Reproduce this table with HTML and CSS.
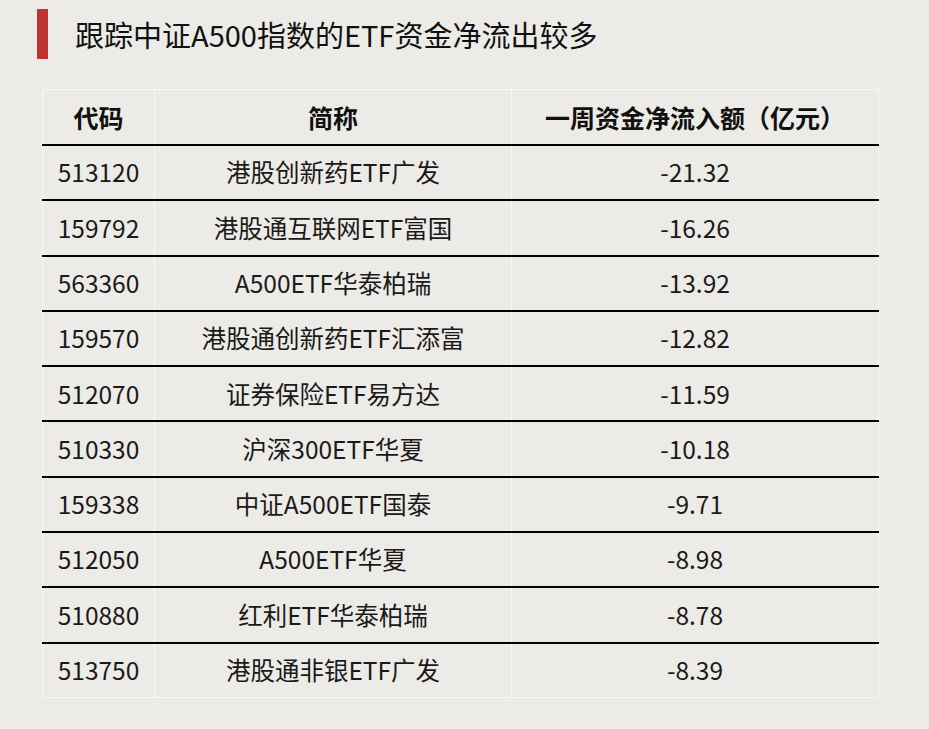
FILE: index.html
```html
<!DOCTYPE html>
<html lang="zh-CN">
<head>
<meta charset="utf-8">
<link rel="stylesheet" href="styles.css">
</head>
<body>
<div class="page">
  <div class="title-row">
    <div class="title-bar"></div>
    <h1 class="title">跟踪中证A500指数的ETF资金净流出较多</h1>
  </div>
  <table class="data">
    <thead>
      <tr><th class="c1">代码</th><th class="c2">简称</th><th class="c3">一周资金净流入额（亿元）</th></tr>
    </thead>
    <tbody>
      <tr><td>513120</td><td>港股创新药ETF广发</td><td>-21.32</td></tr>
      <tr><td>159792</td><td>港股通互联网ETF富国</td><td>-16.26</td></tr>
      <tr><td>563360</td><td>A500ETF华泰柏瑞</td><td>-13.92</td></tr>
      <tr><td>159570</td><td>港股通创新药ETF汇添富</td><td>-12.82</td></tr>
      <tr><td>512070</td><td>证券保险ETF易方达</td><td>-11.59</td></tr>
      <tr><td>510330</td><td>沪深300ETF华夏</td><td>-10.18</td></tr>
      <tr><td>159338</td><td>中证A500ETF国泰</td><td>-9.71</td></tr>
      <tr><td>512050</td><td>A500ETF华夏</td><td>-8.98</td></tr>
      <tr><td>510880</td><td>红利ETF华泰柏瑞</td><td>-8.78</td></tr>
      <tr><td>513750</td><td>港股通非银ETF广发</td><td>-8.39</td></tr>
    </tbody>
  </table>
</div>
</body>
</html>
```
FILE: styles.css
```css
html, body {
  margin: 0;
  padding: 0;
  background: #ecebe7;
}
body {
  width: 929px;
  height: 729px;
  overflow: hidden;
  font-family: "Noto Sans CJK SC", "Noto Sans", sans-serif;
  color: #111;
}
.page {
  padding: 9px 0 0 37px;
}
.title-row {
  display: flex;
  align-items: center;
  gap: 27px;
  height: 50px;
}
.title-bar {
  width: 11px;
  height: 50px;
  background: #bc3330;
}
.title {
  margin: 0;
  font-size: 29px;
  font-weight: 400;
  line-height: 1;
  color: #111;
}
.data {
  margin: 30px 0 0 5px;
  border-collapse: collapse;
  width: 833px;
  table-layout: fixed;
}
.data th, .data td {
  text-align: center;
  padding: 0;
  border-left: 1px solid #f8f7f4;
  border-right: 1px solid #f8f7f4;
  font-size: 24.5px;
  line-height: 1;
}
.data th {
  font-size: 25px;
  font-weight: 700;
  height: 54px;
  border-top: 1px solid #f8f7f4;
  border-bottom: 2px solid #000;
}
.data td {
  height: 53.3px;
  border-bottom: 2px solid #000;
  color: #1a1a1a;
}
.data tbody tr:last-child td {
  border-bottom: 1px solid #f8f7f4;
}
.c1 { width: 111px; }
.c2 { width: 356px; }
.c3 { width: 366px; }
```
